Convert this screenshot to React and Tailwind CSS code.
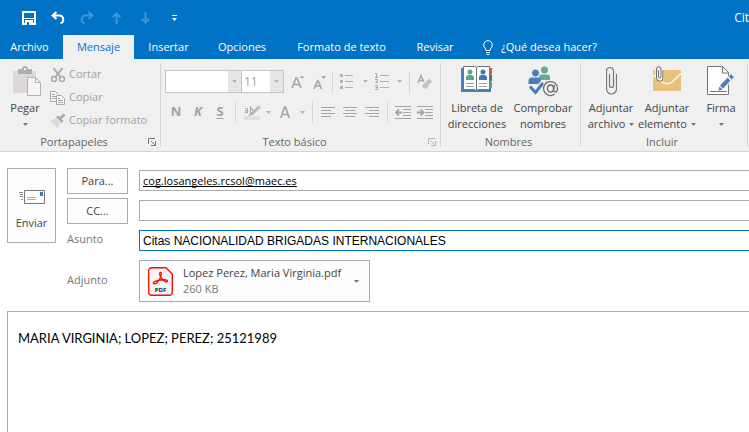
import React, { useState } from 'react';
import clsx from 'clsx';

const tabs = [
  { name: 'Archivo', width: 'w-[63px] pr-1' },
  { name: 'Mensaje', width: 'w-[71px]' },
  { name: 'Insertar', width: 'w-[69px]' },
  { name: 'Opciones', width: 'w-[78px]' },
  { name: 'Formato de texto', width: 'w-[121px]' },
  { name: 'Revisar', width: 'w-[66px]' }
];

/* ---------- Icons ---------- */

const Icon = ({ w = 16, h = 16, className, children }) => (
  <svg width={w} height={h} viewBox={`0 0 ${w} ${h}`} fill="none" className={clsx('shrink-0', className)} aria-hidden="true">
    {children}
  </svg>
);

const Caret = ({ className = 'text-[#767676]' }) => (
  <Icon w={5} h={3} className={className}>
    <path d="M0 0h5L2.5 3z" fill="currentColor" />
  </Icon>
);

const SaveIcon = () => (
  <Icon w={14} h={14}>
    <path d="M1 1h12v12H1z" stroke="#fff" strokeWidth="2" />
    <path d="M1 7h12v1H1z" fill="#fff" />
    <path d="M3 9h8v4H3z" fill="#fff" />
    <path d="M5 11h2v3H5z" fill="#0173c7" />
  </Icon>
);

const UndoIcon = () => (
  <Icon w={14} h={14}>
    <path d="M5.5 1L1.5 4.5l4 3.5M2 4.5h6.5a4 4 0 0 1 1 7.8" stroke="currentColor" strokeWidth="2" />
  </Icon>
);

const ArrowUpIcon = ({ className }) => (
  <Icon w={9} h={12} className={className}>
    <path d="M4.5 12V1.5M.7 5.3l3.8-3.8 3.8 3.8" stroke="currentColor" strokeWidth="2" />
  </Icon>
);

const BulbIcon = () => (
  <Icon w={10} h={15}>
    <path d="M3 10.5C3 8.5.8 7.8.8 4.8a4.2 4.2 0 0 1 8.4 0c0 3-2.2 3.7-2.2 5.7z" stroke="#fff" />
    <path d="M3 12.5h4M3.5 14.3h3" stroke="#fff" />
  </Icon>
);

const PasteIcon = () => (
  <Icon w={28} h={30}>
    <path d="M0 5h23v22H0z" fill="#dcd8dc" />
    <path d="M5 3h4a3 3 0 0 1 6 0h4v5H5z" fill="#b0aeb0" />
    <path d="M11 2h2v2h-2z" fill="#f0f0f0" />
    <path d="M14.5 11.5h8l5 5v13h-13z" fill="#f7f4f8" stroke="#b3b0b3" />
    <path d="M22.5 11.5v5h5" stroke="#b3b0b3" />
  </Icon>
);

const ScissorsIcon = () => (
  <Icon>
    <path d="M3.5 1L11 10.5M12.5 1L5 10.5" stroke="#aaa" strokeWidth="2" />
    <circle cx="4" cy="12" r="2.5" stroke="#aaa" strokeWidth="1.5" />
    <circle cx="12" cy="12" r="2.5" stroke="#aaa" strokeWidth="1.5" />
  </Icon>
);

const CopyIcon = () => (
  <Icon>
    <path d="M.5 1.5h5l3 3v7h-8z" fill="#f5f5f5" stroke="#a9a9a9" />
    <path d="M2 4.5h3M2 6.5h4M2 8.5h4" stroke="#a9a9a9" />
    <path d="M6.5 5.5h5l3 3v6h-8z" fill="#f5f5f5" stroke="#a9a9a9" />
    <path d="M8 8.5h2M8 10.5h5M8 12.5h5" stroke="#a9a9a9" />
  </Icon>
);

const BrushIcon = () => (
  <Icon>
    <path d="M0 8l6-3 5 5-4 5z" fill="#dcd8dc" />
    <path d="M6 4l2-1.5L13.5 8 12 10z" fill="#aaa" />
    <path d="M10 5.5l4.5-4" stroke="#aaa" strokeWidth="3" />
  </Icon>
);

const LauncherIcon = () => (
  <Icon w={8} h={8}>
    <path d="M.5 6V.5H7" stroke="currentColor" />
    <path d="M3 3l3.5 3.5M7.5 3v4.5H3" stroke="currentColor" />
  </Icon>
);

const FontSizeIcon = ({ grow }) => (
  <Icon w={14} h={16}>
    <path
      d={grow ? 'M1 14L5 4h1l4 10M2.5 10.5h6' : 'M1 15L4.5 6.5h.5L8.5 15M2.2 12h5.2'}
      stroke="#a6a6a6"
      strokeWidth="1.6"
    />
    <path d={grow ? 'M8.5 4h5L11 1.5z' : 'M8 2h5l-2.5 3z'} fill="#a6a6a6" />
  </Icon>
);

const BulletsIcon = () => (
  <Icon w={14} h={15}>
    <path d="M5 1.5h8M5 7.5h8M5 13.5h8" stroke="#b0b0b0" />
    <path d="M0 0h3v3H0zM0 6h3v3H0zM0 12h3v3H0z" fill="#b0b0b0" />
  </Icon>
);

const NumberingIcon = () => (
  <Icon w={15} h={17}>
    <path d="M5 2.5h9M5 8.5h9M5 14.5h9" stroke="#b0b0b0" />
    <path d="M0 .5h1.5v4M0 4.5h3M0 6.5h2.5V8l-2 1.5H3M0 12.5h2.5v4H0M.5 14.5h2" stroke="#a6a6a6" />
  </Icon>
);

const EraserIcon = () => (
  <Icon w={16} h={16}>
    <path d="M1 9l3-7.5L7 8M2 6.5h4" stroke="#a6a6a6" strokeWidth="1.3" />
    <path d="M9 7.5l3.5-3L15 8l-5 4.5z" fill="#c4c1c4" />
    <path d="M8.3 8.2l3.5 4-2.3 2.3H7L4.8 12z" fill="#c4c1c4" />
  </Icon>
);

const HighlightIcon = () => (
  <Icon w={17} h={15}>
    <path d="M0 11h16v4H0z" fill="#e4dfe4" />
    <path d="M1 3.5h2.5V8M3.5 5.5h-2v2h2M6.5 1v6.5H9V4H6.500" stroke="#a6a6a6" />
    <path d="M15.5 1.5L8 9" stroke="#bbb8bb" strokeWidth="3" />
    <path d="M4 11l3-3.5 2 2z" fill="#a6a6a6" />
  </Icon>
);

const FontColorIcon = () => (
  <Icon w={10} h={12}>
    <path d="M.8 12L4.5 1.2h1L9.2 12M2.2 8.5h5.6" stroke="#a6a6a6" strokeWidth="1.7" />
  </Icon>
);

const alignPaths = {
  left: 'M0 .5h14M0 3.5h10M0 6.5h14M0 9.5h10',
  center: 'M0 .5h14M2 3.5h10M0 6.5h14M2 9.5h10',
  right: 'M0 .5h14M4 3.5h10M0 6.5h14M4 9.5h10'
};

const AlignIcon = ({ type }) => (
  <Icon w={14} h={10}>
    <path d={alignPaths[type]} stroke="#a6a6a6" />
  </Icon>
);

const IndentIcon = ({ increase }) => (
  <Icon w={16} h={13}>
    <path d="M0 .5h16M8 3.5h8M8 6.5h8M8 9.5h8M0 12.5h16" stroke="#a6a6a6" />
    <path
      d={increase ? 'M0 6.5h6M3.5 3.5l3 3-3 3' : 'M7 6.5H1M4 3.5l-3 3 3 3'}
      stroke="#a6a6a6"
      strokeWidth="1.8"
    />
  </Icon>
);

const AddressBookIcon = () => (
  <Icon w={32} h={27}>
    <path d="M0 2h30v24H0z" fill="#4a7ebb" />
    <path d="M29 2h2v6h-2z" fill="#e2553d" />
    <path d="M29 9h2v6h-2z" fill="#5f6a72" />
    <path d="M29 16h2v6h-2z" fill="#5fa58b" />
    <path d="M2.5.5H14l1.5 1 1.5-1h11.5v23h-11l-2 1-2-1h-11z" fill="#fff" stroke="#747474" />
    <path d="M15.5 2v22" stroke="#747474" />
    <circle cx="9" cy="6" r="2.5" fill="#5fa58b" />
    <path d="M5 14v-2a3 3 0 0 1 3-3h2a3 3 0 0 1 3 3v2z" fill="#5fa58b" />
    <circle cx="22" cy="6" r="2.5" fill="#3f78b8" />
    <path d="M18 14v-2a3 3 0 0 1 3-3h2a3 3 0 0 1 3 3v2z" fill="#3f78b8" />
    <path d="M5 17.5h8M5 20.5h8M18 17.5h8M18 20.5h8" stroke="#a0a0a0" />
  </Icon>
);

const CheckNamesIcon = () => (
  <Icon w={31} h={31}>
    <circle cx="16.5" cy="4" r="3.5" fill="#6aa893" />
    <path d="M11 14v-2.5a3 3 0 0 1 3-3h5a3 3 0 0 1 3 3V14z" fill="#6aa893" />
    <circle cx="7.5" cy="7" r="4" fill="#4a7ebb" stroke="#f0f0f0" />
    <path d="M.5 18v-3A3.5 3.5 0 0 1 4 11.5h6a3.500 3.500 0 0 1 3 3.500l-3 3z" fill="#4a7ebb" />
    <path d="M2 20.5l5.5 6L15 17" stroke="#f0f0f0" strokeWidth="5" />
    <path d="M2 20.5l5.5 6L15 17" stroke="#4a7ebb" strokeWidth="3" />
    <circle cx="22.5" cy="22.5" r="8" fill="#f0f0f0" />
    <path d="M26.5 28.3a7 7 0 1 1 3-5.8c0 2.5-1.2 3.5-2.3 3.5s-1.7-.7-1.5-2l.8-5" stroke="#6c6c6c" strokeWidth="1.3" />
    <ellipse cx="22.5" cy="22.5" rx="3" ry="3.5" stroke="#6c6c6c" strokeWidth="1.3" />
  </Icon>
);

const PaperclipIcon = () => (
  <Icon w={11} h={29}>
    <path
      d="M3.5 8v11.5a2 2 0 0 0 4 0V5a3.5 3.5 0 0 0-7 0v18a5 5 0 0 0 10 0V8"
      stroke="#767676"
      strokeWidth="1.2"
    />
  </Icon>
);

const EnvelopeClipIcon = () => (
  <Icon w={28} h={28}>
    <path d="M0 4h28v21H0z" fill="#ebc27d" />
    <path d="M0 9l9 7c3 2.2 7 2.2 10 0l9-8.5" stroke="#fdf8ef" strokeWidth="1.5" />
    <path d="M2 0h9v13l-4 2-5-4z" fill="#f0f0f0" />
    <path d="M5.5 4v7A1.3 1.3 0 0 0 8 11V3a2.2 2.2 0 0 0-4.5 0v9a3.200 3.200 0 0 0 6.500 0V4" stroke="#6c6c6c" />
  </Icon>
);

const SignatureIcon = () => (
  <Icon w={28} h={30}>
    <path d="M.5.5h15l6 6v22H.5z" fill="#fff" stroke="#747474" />
    <path d="M15.5.5v6.500h6" stroke="#747474" />
    <path d="M3 25.5h17" stroke="#4a7ebb" />
    <path d="M14.5 21.5L24.5 11" stroke="#f0f0f0" strokeWidth="6" />
    <path d="M14.5 21l7.5-7.8M23.2 12l2.3-2.3" stroke="#4a7ebb" strokeWidth="4" />
    <path d="M11.5 24.5l1-4 3 3z" fill="#4a7ebb" />
  </Icon>
);

const SendIcon = () => (
  <Icon w={28} h={15}>
    <path d="M6.5.5h20v13h-20z" fill="#fff" stroke="#767676" />
    <path d="M22 2h3v4h-3z" fill="#3f78b8" />
    <path d="M9 7.5h9M9 9.5h9" stroke="#b0b0b0" />
    <path d="M1 2.5h4M2 4.5h3M2 6.5h3M3 9.5h2" stroke="#8a8a8a" />
  </Icon>
);

const PdfIcon = () => (
  <Icon w={25} h={29}>
    <path d="M3.7.7H18L24.3 7v18.3a3 3 0 0 1-3 3H3.7a3 3 0 0 1-3-3V3.700a3 3 0 0 1 3-3z" fill="#f5f5f5" stroke="#fa0f00" strokeWidth="1.4" />
    <path
      d="M5.5 16.500c-1-1.500 3.500-3 7-3.500s7.500-.3 7 1.200-4-.2-6-3-2.500-5.500-1-5.700 1 3.200-.8 6.500-4.500 6-6.200 4.500z"
      stroke="#fa0f00"
      strokeWidth="1.3"
    />
    <text x="12.5" y="25" textAnchor="middle" fontSize="6" fontWeight="bold" fill="#222" className="font-['Open_Sans',sans-serif]">PDF</text>
  </Icon>
);

/* ---------- Ribbon parts ---------- */

const Group = ({ label, launcher, className, children }) => (
  <section aria-label={label} className={clsx('flex shrink-0 flex-col border-r border-[#d5d5d5]', className)}>
    <div className="h-[74px]">{children}</div>
    <div className="flex h-2.5 items-center pr-1 text-[#666]">
      <span className="flex-1 text-center leading-4">{label}</span>
      {launcher && (
        <button aria-label={`Opciones de ${label}`} className={launcher}>
          <LauncherIcon />
        </button>
      )}
    </div>
  </section>
);

const BigButton = ({ icon, lines, caret, className }) => (
  <button className={clsx('flex shrink-0 flex-col items-center text-[#444]', className)}>
    <span className="flex h-[37px] items-start pt-[3px]">{icon}</span>
    <span className="leading-4 whitespace-nowrap">{lines[0]}</span>
    <span className="flex h-4 items-center gap-1 leading-4 whitespace-nowrap">
      {lines[1]}
      {caret && <Caret />}
    </span>
  </button>
);

const SmallButton = ({ icon, label }) => (
  <button className="flex h-[23px] items-center gap-[3px] text-[#a3a3a3]">
    {icon}
    <span className="whitespace-nowrap">{label}</span>
  </button>
);

const Tool = ({ label, className = 'w-[22px]', children }) => (
  <button aria-label={label} className={clsx('flex h-[22px] shrink-0 items-center justify-center text-[#a3a3a3]', className)}>
    {children}
  </button>
);

const Divider = ({ className }) => <span className={clsx('h-[22px] w-px shrink-0 bg-[#d5d5d5]', className)} />;

const Combo = ({ label, value, className }) => (
  <div className={clsx('relative h-[23px] shrink-0 border border-[#c6c6c6] bg-white', className)}>
    <select aria-label={label} defaultValue={value} className="h-full w-full appearance-none pl-0.5 text-xs text-[#a3a3a3]">
      <option>{value}</option>
    </select>
    <span className="pointer-events-none absolute inset-y-0 right-0 flex w-[13px] items-center justify-center bg-[#e6e6e6]">
      <Caret className="text-[#b5b5b5]" />
    </span>
  </div>
);

const Ribbon = () => (
  <div className="flex overflow-hidden border-b border-[#d5d5d5] bg-[#f0f0f0] py-1 text-[11px]">
    <Group label="Portapapeles" launcher="text-[#777]" className="w-[161px]">
      <div className="flex">
        <button className="flex w-[50px] flex-col items-center text-[#444]">
          <span className="flex h-[37px] items-start pt-[3px] pl-1">
            <PasteIcon />
          </span>
          <span className="leading-4">Pegar</span>
          <span className="flex h-4 items-center">
            <Caret />
          </span>
        </button>
        <div className="flex flex-col">
          <SmallButton icon={<ScissorsIcon />} label="Cortar" />
          <SmallButton icon={<CopyIcon />} label="Copiar" />
          <SmallButton icon={<BrushIcon />} label="Copiar formato" />
        </div>
      </div>
    </Group>

    <Group label="Texto básico" launcher="text-[#b5b5b5]" className="w-[280px]">
      <div className="flex flex-col gap-2 pt-[7px] pl-1">
        <div className="flex items-center">
          <Combo label="Fuente" value="" className="w-[77px]" />
          <Combo label="Tamaño de fuente" value="11" className="-ml-px w-[43px]" />
          <Tool label="Aumentar tamaño" className="w-6 pl-1"><FontSizeIcon grow /></Tool>
          <Tool label="Disminuir tamaño" className="w-6"><FontSizeIcon /></Tool>
          <Divider />
          <Tool label="Viñetas" className="w-7"><BulletsIcon /></Tool>
          <Tool label="Más viñetas" className="w-2"><Caret className="text-[#b5b5b5]" /></Tool>
          <Tool label="Numeración" className="w-[26px]"><NumberingIcon /></Tool>
          <Tool label="Más numeración" className="w-2"><Caret className="text-[#b5b5b5]" /></Tool>
          <Divider className="ml-1.5" />
          <Tool label="Borrar formato" className="w-[30px]"><EraserIcon /></Tool>
        </div>
        <div className="flex items-center">
          <Tool label="Negrita"><b className="text-[13px]">N</b></Tool>
          <Tool label="Cursiva"><b className="text-[13px] italic">K</b></Tool>
          <Tool label="Subrayado"><b className="text-[13px] underline underline-offset-2">S</b></Tool>
          <Divider className="ml-1" />
          <Tool label="Resaltado" className="w-7 pl-1"><HighlightIcon /></Tool>
          <Tool label="Más resaltado" className="w-2"><Caret className="text-[#b5b5b5]" /></Tool>
          <Tool label="Color de fuente" className="w-[26px]"><FontColorIcon /></Tool>
          <Tool label="Más colores" className="w-2"><Caret className="text-[#b5b5b5]" /></Tool>
          <Divider className="mr-1 ml-1.5" />
          <Tool label="Alinear a la izquierda"><AlignIcon type="left" /></Tool>
          <Tool label="Centrar"><AlignIcon type="center" /></Tool>
          <Tool label="Alinear a la derecha"><AlignIcon type="right" /></Tool>
          <Divider className="mx-1" />
          <Tool label="Disminuir sangría"><IndentIcon /></Tool>
          <Tool label="Aumentar sangría"><IndentIcon increase /></Tool>
        </div>
      </div>
    </Group>

    <Group label="Nombres" className="w-[140px]">
      <div className="flex pl-[3px]">
        <BigButton icon={<AddressBookIcon />} lines={['Libreta de', 'direcciones']} className="w-[66px]" />
        <BigButton icon={<CheckNamesIcon />} lines={['Comprobar', 'nombres']} className="w-[66px]" />
      </div>
    </Group>

    <Group label="Incluir" className="w-[167px]">
      <div className="flex pl-0.5">
        <BigButton icon={<PaperclipIcon />} lines={['Adjuntar', 'archivo']} caret className="w-14" />
        <BigButton icon={<EnvelopeClipIcon />} lines={['Adjuntar', 'elemento']} caret className="w-14" />
        <BigButton icon={<SignatureIcon />} lines={['Firma']} caret className="w-[52px]" />
      </div>
    </Group>
  </div>
);

/* ---------- Message ---------- */

const HeaderButton = ({ children }) => (
  <button className="mt-0.5 h-[26px] border border-[#ababab] bg-[#fdfdfd] text-[#444]">{children}</button>
);

const fieldClass = 'mt-1 h-[21px] w-full min-w-0 border border-r-0 pl-[3px] text-black outline-none';

const MessageForm = () => {
  const [to, setTo] = useState('cog.losangeles.rcsol@maec.es');
  const [cc, setCc] = useState('');
  const [subject, setSubject] = useState('Citas NACIONALIDAD BRIGADAS INTERNACIONALES');

  return (
    <div className="flex pt-[14px] pl-[7px] text-[11px]">
      <button className="mt-0.5 flex h-[75px] w-[49px] shrink-0 flex-col items-center border border-[#ababab] bg-[#fdfdfd] pt-[21px] text-[#444]">
        <SendIcon />
        <span className="mt-2.5 leading-4">Enviar</span>
      </button>
      <div className="ml-[11px] grid flex-1 grid-cols-[61px_1fr] grid-rows-[30px_30px_30px_50px] items-start gap-x-[11px]">
        <HeaderButton>Para...</HeaderButton>
        <input
          aria-label="Para"
          value={to}
          onChange={e => setTo(e.target.value)}
          className={clsx(fieldClass, 'border-[#ababab] underline [text-decoration-skip-ink:none]')}
        />
        <HeaderButton>CC...</HeaderButton>
        <input aria-label="CC" value={cc} onChange={e => setCc(e.target.value)} className={clsx(fieldClass, 'border-[#ababab]')} />
        <label htmlFor="asunto" className="mt-[5px] leading-4 text-[#777]">Asunto</label>
        <input
          id="asunto"
          value={subject}
          onChange={e => setSubject(e.target.value)}
          className={clsx(fieldClass, "border-[#0173c7] font-['Liberation_Sans',Arial,sans-serif] text-xs")}
        />
        <span className="mt-4 leading-4 text-[#777]">Adjunto</span>
        <button className="mt-1 flex h-[42px] w-[231px] items-center border border-[#ababab] bg-[#fdfdfd] pr-2.5 pl-2 text-left">
          <PdfIcon />
          <span className="ml-2.5 flex-1 leading-4 whitespace-nowrap">
            <span className="block text-[#444]">Lopez Perez, Maria Virginia.pdf</span>
            <span className="block text-[#777]">260 KB</span>
          </span>
          <Caret />
        </button>
      </div>
    </div>
  );
};

export default function App() {
  const [activeTab, setActiveTab] = useState('Mensaje');

  return (
    <div className="flex min-h-screen flex-col overflow-hidden bg-white font-['Open_Sans','Noto_Sans',sans-serif] text-[11px]">
      <header className="bg-[#0173c7] text-white">
        {/* Quick access */}
        <div className="flex h-[35px] items-center justify-between">
          <div className="flex h-[30px] items-center pl-[15px]">
            <button aria-label="Guardar" className="flex w-7 justify-center"><SaveIcon /></button>
            <button aria-label="Deshacer" className="flex w-[30px] justify-center"><UndoIcon /></button>
            <button aria-label="Rehacer" className="flex w-7 -scale-x-100 justify-center text-[#3d95d6]"><UndoIcon /></button>
            <button aria-label="Anterior" className="flex w-[30px] justify-center text-[#3d95d6]"><ArrowUpIcon /></button>
            <button aria-label="Siguiente" className="flex w-7 justify-center text-[#3d95d6]"><ArrowUpIcon className="rotate-180" /></button>
            <button aria-label="Personalizar" className="flex w-[30px] justify-center">
              <Icon w={5} h={6}>
                <path d="M0 0h5v1H0zM0 3h5L2.5 6z" fill="#fff" />
              </Icon>
            </button>
          </div>
          <span className="text-xs">Cit</span>
        </div>

        {/* Tabs */}
        <nav className="flex h-6 items-stretch">
          {tabs.map(tab => (
            <button
              key={tab.name}
              onClick={() => setActiveTab(tab.name)}
              className={clsx(
                'shrink-0 whitespace-nowrap',
                tab.width,
                activeTab === tab.name && 'bg-[#f0f0f0] text-[#0173c7]'
              )}
            >
              {tab.name}
            </button>
          ))}
          <button className="ml-[15px] flex items-center gap-2 whitespace-nowrap">
            <BulbIcon />
            ¿Qué desea hacer?
          </button>
        </nav>
      </header>

      <Ribbon />
      <MessageForm />

      <textarea
        aria-label="Mensaje"
        defaultValue="MARIA VIRGINIA; LOPEZ; PEREZ; 25121989"
        className="mt-[5px] ml-[7px] flex-1 resize-none border-t border-l border-[#ababab] px-2.5 py-4 font-['Lato',sans-serif] text-[13px] leading-5 text-black outline-none"
      />
    </div>
  );
}
